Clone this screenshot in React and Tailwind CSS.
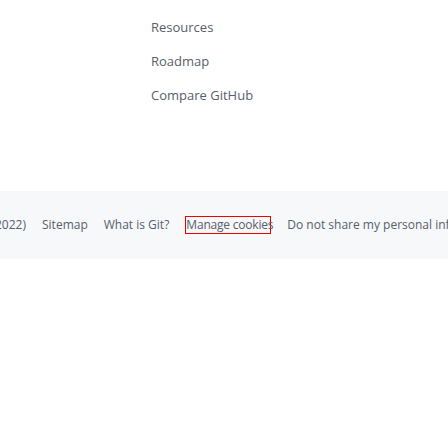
import React from 'react';

const topLinks = ['Resources', 'Roadmap', 'Compare GitHub'];

const App = () => {
  return (
    <div className="w-[448px] h-[448px] overflow-hidden bg-white font-['Open_Sans',sans-serif] text-[#57606a]">
      <ul className="pt-[18px] pl-[151px] flex flex-col gap-4">
        {topLinks.map((l) => (
          <li key={l} className="text-[13px] leading-[18px]">
            <a href="#">{l}</a>
          </li>
        ))}
      </ul>
      <footer className="mt-[87px] h-[68px] bg-[#f6f8fa] flex items-center overflow-hidden">
        <ul className="flex items-center gap-4 whitespace-nowrap text-[12px] leading-[18px] -ml-[94px] shrink-0">
          <li className="w-[120px] flex justify-end">
            <span className="shrink-0">Privacy (Updated 08/2022)</span>
          </li>
          <li><a href="#">Sitemap</a></li>
          <li><a href="#">What is Git?</a></li>
          <li>
            <button className="w-[86px] h-[18px] border border-[#ee0000] text-left leading-[16px] whitespace-nowrap tracking-[-0.2px]">
              Manage cookies
            </button>
          </li>
          <li><a href="#">Do not share my personal information</a></li>
        </ul>
      </footer>
    </div>
  );
};

export default App;
